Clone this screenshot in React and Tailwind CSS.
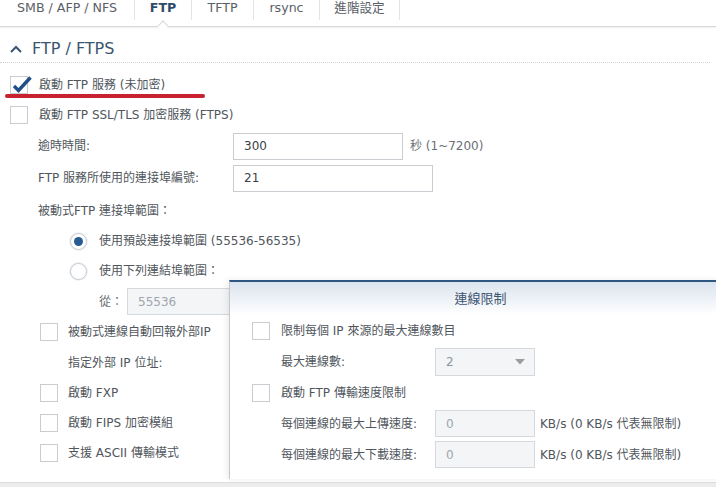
import React from "react";
import clsx from "clsx";

const Box = ({ checked }) => (
  <span className="relative w-[18px] h-[18px] border border-[#c9ccd0] bg-white shrink-0">
    {checked && (
      <svg className="absolute left-[1px] top-[-1px] overflow-visible" width="22" height="18" viewBox="0 0 22 18">
        <polyline points="2,10 6.5,14.5 18.5,1.5" fill="none" stroke="#1f4f88" strokeWidth="3.4" />
      </svg>
    )}
  </span>
);

const Radio = ({ on }) => (
  <span className="w-[17px] h-[17px] rounded-full border border-[#c6cacf] bg-white flex items-center justify-center shrink-0 shadow-[0_0_0_1px_#eef3f8]">
    {on && <span className="w-[9px] h-[9px] rounded-full bg-[#285a94]" />}
  </span>
);

const Field = ({ value, width, disabled }) => (
  <div
    className={clsx(
      "h-[27px] border flex items-center pl-[10px] shrink-0",
      width,
      disabled ? "bg-[#f3f5f7] border-[#d5d9dd] text-[#a0a6ac]" : "bg-white border-[#c9cdd2] text-[#3a3f44]"
    )}
  >
    {value}
  </div>
);

const CheckRow = ({ checked, children, indent }) => (
  <div className={clsx("flex items-center h-[30px]", indent ? "pl-[40px] gap-[10px]" : "pl-[10px] gap-[11px]")}>
    <Box checked={checked} />
    <span>{children}</span>
  </div>
);

const tabs = [
  { label: "SMB / AFP / NFS", w: "w-[135px]" },
  { label: "FTP", w: "w-[57px]", active: true },
  { label: "TFTP", w: "w-[62px]" },
  { label: "rsync", w: "w-[66px]" },
  { label: "進階設定", w: "w-[80px]" },
];

const ConnectionLimit = () => (
  <div className="absolute left-[229px] top-[253px] w-[502px] bottom-[3px] bg-white border-t-2 border-[#2f5781] border-l border-l-[#c4c7cb] shadow-[-2px_0_6px_rgba(0,0,0,0.08)]">
    <div className="h-[33px] flex items-center justify-center bg-gradient-to-b from-[#dbe4ee] to-white text-[13px] text-[#3c5571]">
      連線限制
    </div>
    <div className="flex items-center h-[31px] pl-[22px] gap-[11px]">
      <Box />
      <span>限制每個 IP 來源的最大連線數目</span>
    </div>
    <div className="flex items-center h-[31px] pl-[51px]">
      <span className="w-[154px]">最大連線數:</span>
      <div className="w-[100px] h-[28px] border border-[#d5d9dd] bg-[#f3f5f7] flex items-center justify-between pl-[10px] pr-[9px] text-[#8f959b]">
        <span>2</span>
        <svg width="10" height="6" viewBox="0 0 10 6">
          <polygon points="0,0 10,0 5,5.5" fill="#9a9ea3" />
        </svg>
      </div>
    </div>
    <div className="flex items-center h-[31px] pl-[22px] gap-[11px]">
      <Box />
      <span>啟動 FTP 傳輸速度限制</span>
    </div>
    <div className="flex items-center h-[31px] pl-[51px]">
      <span className="w-[154px]">每個連線的最大上傳速度:</span>
      <Field value="0" width="w-[100px]" disabled />
      <span className="ml-[5px]">KB/s (0 KB/s 代表無限制)</span>
    </div>
    <div className="flex items-center h-[31px] pl-[51px]">
      <span className="w-[154px]">每個連線的最大下載速度:</span>
      <Field value="0" width="w-[100px]" disabled />
      <span className="ml-[5px]">KB/s (0 KB/s 代表無限制)</span>
    </div>
  </div>
);

export default function App() {
  return (
    <div className="w-[716px] h-[487px] overflow-hidden bg-white flex flex-col text-[12px] text-[#50565c] font-['DejaVu_Sans','Noto_Sans_CJK_TC',sans-serif]">
      {/* tab bar */}
      <div className="h-[27px] shrink-0 flex border-b border-[#d6d8da] shadow-[0_1px_2px_rgba(0,0,0,0.07)] relative z-10 bg-white">
        {tabs.map((t) => (
          <div
            key={t.label}
            className={clsx(
              "relative h-[20px] flex justify-center border-r border-[#e2e4e6] text-[12.6px] leading-[14px] pt-[1px]",
              t.w,
              t.active ? "font-bold text-[#2f4b69]" : "text-[#5a6066]"
            )}
          >
            {t.label}
            {t.active && (
              <span className="absolute left-[24px] top-[22px] w-[8px] h-[8px] rotate-45 bg-white border-l border-t border-[#d6d8da]" />
            )}
          </div>
        ))}
      </div>

      {/* content */}
      <div className="flex-1 relative overflow-hidden">
        <div className="h-[36px] flex items-center pt-[9px] pl-[10px] gap-[10px] mr-[6px] border-b border-dotted border-[#cfd2d5]">
          <svg width="12" height="8" viewBox="0 0 12 8">
            <polyline points="1,7 6,2 11,7" fill="none" stroke="#3b5470" strokeWidth="2" />
          </svg>
          <span className="text-[16px] text-[#3b5470]">FTP / FTPS</span>
        </div>

        <div className="pt-[7px]">
          <div className="relative">
            <CheckRow checked>啟動 FTP 服務 (未加密)</CheckRow>
            <span className="absolute left-[5px] top-[24px] w-[200px] h-[4px] rounded-full bg-[#c8212f]" />
          </div>
          <CheckRow>啟動 FTP SSL/TLS 加密服務 (FTPS)</CheckRow>

          <div className="flex items-center h-[32px] pl-[38px]">
            <span className="w-[195px]">逾時時間:</span>
            <Field value="300" width="w-[170px]" />
            <span className="ml-[7px] text-[#6a7076]">秒 (1~7200)</span>
          </div>
          <div className="flex items-center h-[32px] pl-[38px]">
            <span className="w-[195px]">FTP 服務所使用的連接埠編號:</span>
            <Field value="21" width="w-[200px]" />
          </div>

          <div className="flex items-center h-[30px] pl-[38px] mt-[2px]">被動式FTP 連接埠範圍：</div>
          <div className="flex items-center h-[30px] pl-[70px] gap-[12px]">
            <Radio on />
            <span>使用預設連接埠範圍 (55536-56535)</span>
          </div>
          <div className="flex items-center h-[30px] pl-[70px] gap-[12px]">
            <Radio />
            <span>使用下列連結埠範圍：</span>
          </div>
          <div className="flex items-center h-[31px] pl-[99px]">
            <span className="w-[28px] text-[#6a7076]">從：</span>
            <Field value="55536" width="w-[160px]" disabled />
          </div>

          <CheckRow indent>被動式連線自動回報外部IP</CheckRow>
          <div className="flex items-center h-[31px] pl-[68px]">指定外部 IP 位址:</div>
          <CheckRow indent>啟動 FXP</CheckRow>
          <CheckRow indent>啟動 FIPS 加密模組</CheckRow>
          <CheckRow indent>支援 ASCII 傳輸模式</CheckRow>
        </div>

        <ConnectionLimit />
      </div>

      <div className="h-[5px] shrink-0 bg-[#ececec] border-t border-[#dcdcdc]" />
    </div>
  );
}
